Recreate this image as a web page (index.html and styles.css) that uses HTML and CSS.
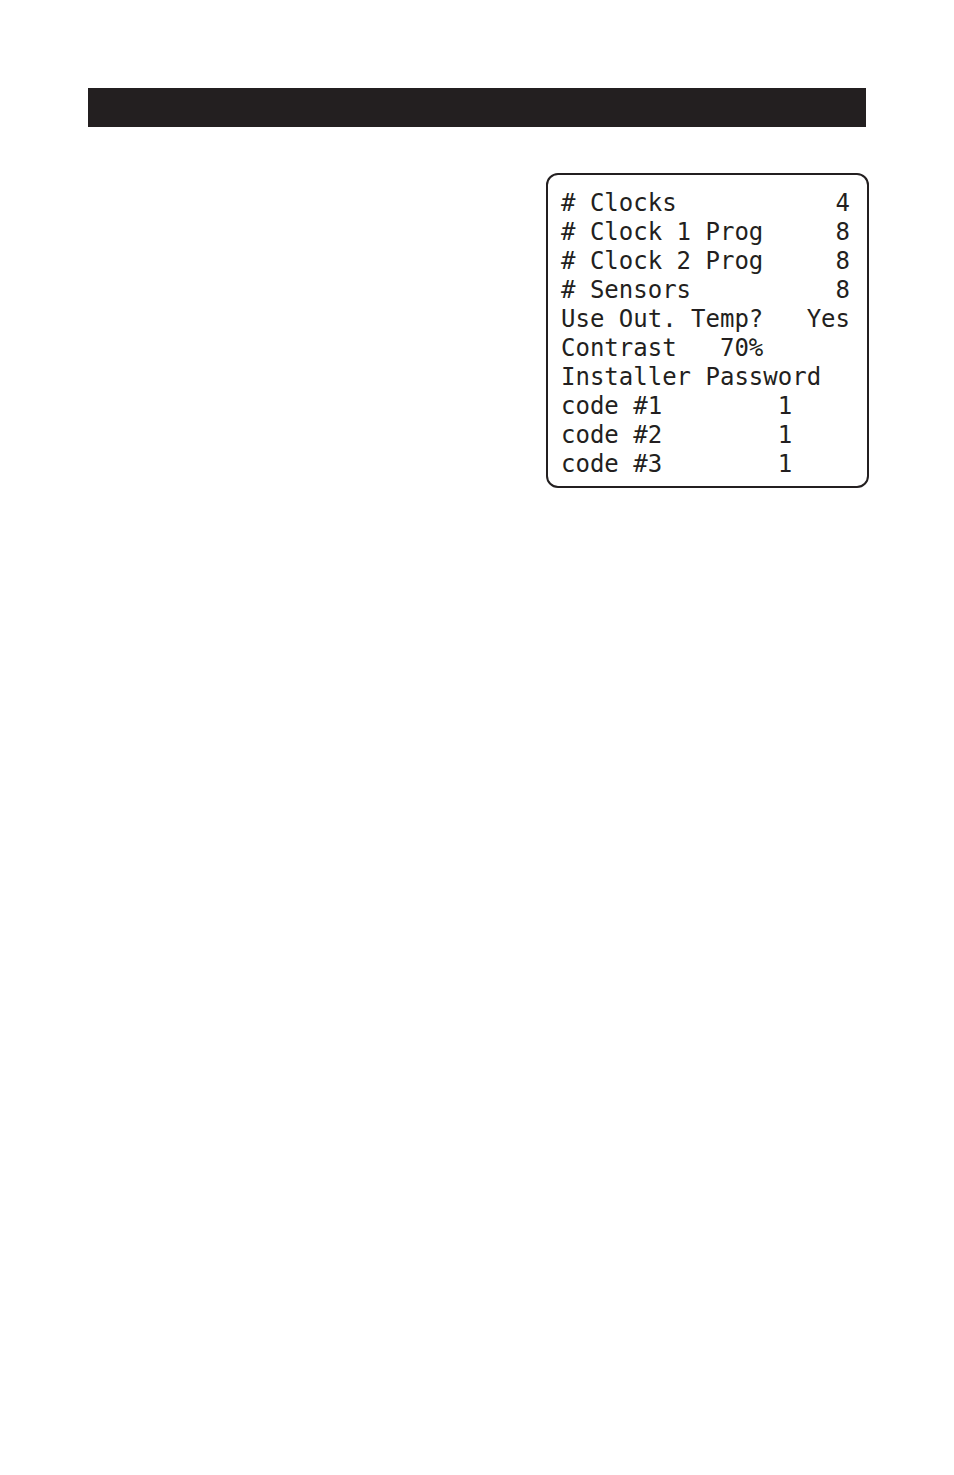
FILE: index.html
```html
<!DOCTYPE html>
<html lang="en">
  <head>
    <meta charset="utf-8">
    <meta name="viewport" content="width=device-width, initial-scale=1.0">
    <title>Installer Setup</title>
    <link rel="stylesheet" href="styles.css">
  </head>
  <body>
    <header class="title-bar"></header>
    <main>
      <div class="screen">
        <table>
          <tbody>
            <tr>
              <th scope="row"># Clocks</th>
              <td>4</td>
            </tr>
            <tr>
              <th scope="row"># Clock 1 Prog</th>
              <td>8</td>
            </tr>
            <tr>
              <th scope="row"># Clock 2 Prog</th>
              <td>8</td>
            </tr>
            <tr>
              <th scope="row"># Sensors</th>
              <td>8</td>
            </tr>
            <tr>
              <th scope="row">Use Out. Temp?</th>
              <td>Yes</td>
            </tr>
            <tr>
              <th scope="row">Contrast</th>
              <td class="percent">70%</td>
            </tr>
            <tr>
              <th scope="rowgroup" colspan="2">Installer Password</th>
            </tr>
            <tr>
              <th scope="row">code #1</th>
              <td class="code">1</td>
            </tr>
            <tr>
              <th scope="row">code #2</th>
              <td class="code">1</td>
            </tr>
            <tr>
              <th scope="row">code #3</th>
              <td class="code">1</td>
            </tr>
          </tbody>
        </table>
      </div>
    </main>
  </body>
</html>
```
FILE: styles.css
```css
body {
    margin: 0;
    padding: 88px 88px 48px;
    background-color: #fff;
    color: #231f20;
    font-family: "DejaVu Sans Mono", monospace;
    font-size: 24px;
    line-height: 29px;
}

.title-bar {
    height: 39px;
    background-color: #231f20;
}

main {
    display: flex;
    justify-content: flex-end;
    margin-top: 46px;
    /* the screen frame hangs a little past the title bar */
    margin-right: -3px;
}

.screen {
    padding: 14px 17px 7px 13px;
    border: 2px solid #231f20;
    border-radius: 12px;
}

/* fixed halves, long labels run over into the value column */
table {
    width: 289px;
    table-layout: fixed;
    border-collapse: collapse;
}

th,
td {
    padding: 0;
    white-space: nowrap;
}

th {
    font-weight: normal;
    text-align: left;
}

td {
    text-align: right;
}

/* values that stop short of the right edge, in character cells */
.percent {
    padding-right: 6ch;
}

.code {
    padding-right: 4ch;
}
```
